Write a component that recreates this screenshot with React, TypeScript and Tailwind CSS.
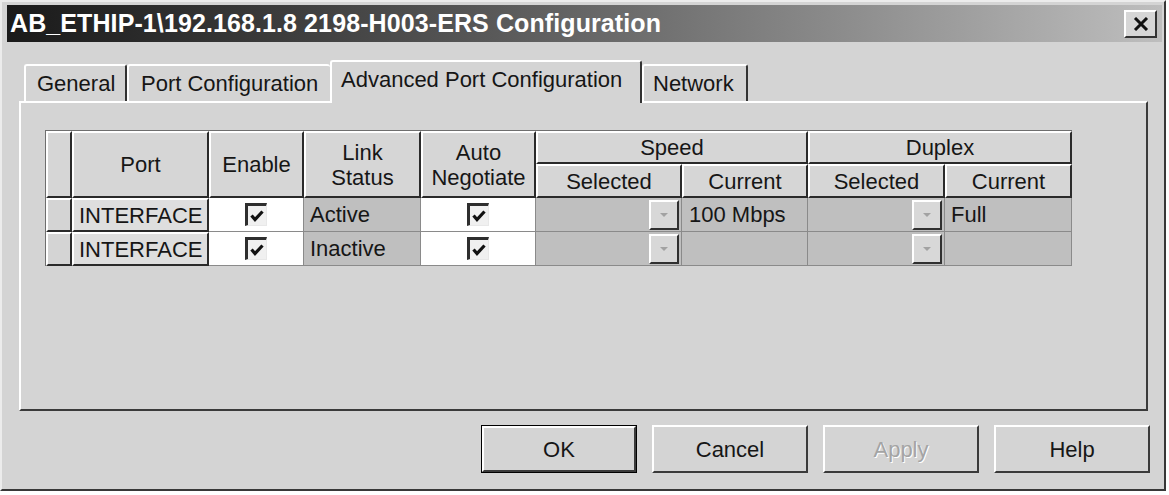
import React from 'react';

const raised =
  'border-t-2 border-l-2 border-r-2 border-b-2 border-t-white border-l-white border-r-[#2a2a2a] border-b-[#2a2a2a]';

function HeaderCell({ children, className = '' }: { children?: React.ReactNode; className?: string }) {
  return (
    <div
      className={`flex items-center justify-center text-center leading-[25px] bg-[#d6d6d6] ${raised} ${className}`}
    >
      {children}
    </div>
  );
}

function CheckBox() {
  return (
    <div className="w-[22px] h-[23px] border-t-[3px] border-l-[3px] border-t-[#2e2e2e] border-l-[#2e2e2e] border-r border-b border-r-[#e8e8e8] border-b-[#e8e8e8] bg-[#f0f0f0] flex items-center justify-center">
      <svg width="16" height="16" viewBox="0 0 16 16">
        <polyline points="2.5,7.5 6,11.5 13.5,3.5" fill="none" stroke="#111" strokeWidth="3.2" />
      </svg>
    </div>
  );
}

function DropButton() {
  return (
    <div className="w-[30px] h-[30px] mr-[2px] bg-[#d8d8d8] border-t-2 border-l-2 border-t-white border-l-white border-r-2 border-b-2 border-r-[#303030] border-b-[#303030] flex items-center justify-center">
      <svg width="10" height="6" viewBox="0 0 10 6">
        <polygon points="1,1 9,1 5,5" fill="#a2a2a2" />
      </svg>
    </div>
  );
}

const rows = [
  { link: 'Active', speed: '100 Mbps', duplex: 'Full' },
  { link: 'Inactive', speed: '', duplex: '' },
];

function PortTable() {
  return (
    <div className="grid grid-cols-[26px_137px_95px_117px_115px_146px_126px_137px_127px] grid-rows-[33px_34px_34px_34px] border-t border-l border-[#6e6e6e] w-fit">
      <HeaderCell className="row-span-2" />
      <HeaderCell className="row-span-2">Port</HeaderCell>
      <HeaderCell className="row-span-2">Enable</HeaderCell>
      <HeaderCell className="row-span-2">
        Link
        <br />
        Status
      </HeaderCell>
      <HeaderCell className="row-span-2">
        Auto
        <br />
        Negotiate
      </HeaderCell>
      <HeaderCell className="col-span-2">Speed</HeaderCell>
      <HeaderCell className="col-span-2">Duplex</HeaderCell>
      <HeaderCell>Selected</HeaderCell>
      <HeaderCell>Current</HeaderCell>
      <HeaderCell>Selected</HeaderCell>
      <HeaderCell>Current</HeaderCell>

      {rows.map((r, i) => (
        <React.Fragment key={i}>
          <div className={`bg-[#d4d4d4] ${raised}`} />
          <div className={`bg-[#dedede] ${raised} flex items-center pl-[5px]`}>INTERFACE</div>
          <div className="bg-white border-r border-b border-[#8a8a8a] flex items-center justify-center">
            <CheckBox />
          </div>
          <div className="bg-[#bfbfbf] border-r border-b border-[#8a8a8a] flex items-center pl-[6px]">
            {r.link}
          </div>
          <div className="bg-white border-r border-b border-[#8a8a8a] flex items-center justify-center">
            <CheckBox />
          </div>
          <div className="bg-[#bfbfbf] border-r border-b border-[#8a8a8a] flex items-center justify-end">
            <DropButton />
          </div>
          <div className="bg-[#bfbfbf] border-r border-b border-[#8a8a8a] flex items-center pl-[7px]">
            {r.speed}
          </div>
          <div className="bg-[#bfbfbf] border-r border-b border-[#8a8a8a] flex items-center justify-end">
            <DropButton />
          </div>
          <div className="bg-[#bfbfbf] border-r border-b border-[#8a8a8a] flex items-center pl-[6px]">
            {r.duplex}
          </div>
        </React.Fragment>
      ))}
    </div>
  );
}

function Tab({ label, selected, className = '' }: { label: string; selected?: boolean; className?: string }) {
  return (
    <div
      className={`flex items-center bg-[#d4d4d4] border-t-2 border-l-2 border-t-white border-l-white rounded-t-[3px] ${
        selected ? 'h-[43px] pb-[6px] relative z-10' : 'h-[37px] mb-[2px]'
      } ${className}`}
    >
      {label}
    </div>
  );
}

function DialogButton({ label, isDefault, disabled }: { label: string; isDefault?: boolean; disabled?: boolean }) {
  return (
    <div className={`w-[156px] h-[48px] ${isDefault ? 'border border-black' : ''}`}>
      <div
        className={`w-full h-full bg-[#d4d4d4] border-t-2 border-l-2 border-t-white border-l-white border-r-2 border-b-2 border-r-[#3a3a3a] border-b-[#3a3a3a] flex items-center justify-center ${
          disabled ? 'text-[#a4a4a4] [text-shadow:1px_1px_0_#fff]' : ''
        }`}
      >
        {label}
      </div>
    </div>
  );
}

export default function App() {
  return (
    <div className="w-[1169px] h-[495px] bg-white overflow-hidden font-['Liberation_Sans',Arial,sans-serif] text-[22px] text-[#161616]">
      <div className="w-[1166px] h-[491px] bg-[#d4d4d4] border-2 border-t-[#ececec] border-l-[#ececec] border-r-[#383838] border-b-[#383838] flex flex-col">
        {/* Title bar */}
        <div className="mt-[3px] ml-[5px] mr-[2px] h-[37px] bg-linear-to-r from-[#1a1a1a] to-[#bebebe] flex items-center justify-between pl-[3px] pr-[5px]">
          <span className="text-white font-bold text-[25px] tracking-[0.1px]">
            AB_ETHIP-1\192.168.1.8 2198-H003-ERS Configuration
          </span>
          <div className="w-[33px] h-[28px] bg-[#d6d6d6] border-t-2 border-l-2 border-t-white border-l-white border-r-2 border-b-2 border-r-[#333] border-b-[#333] flex items-center justify-center">
            <svg width="16" height="14" viewBox="0 0 16 14">
              <path d="M2 1 L14 13 M14 1 L2 13" stroke="#111" strokeWidth="3" />
            </svg>
          </div>
        </div>

        {/* Tabs */}
        <div className="mt-[18px] ml-[22px] flex items-end h-[43px] -mb-[2px] relative z-10">
          <Tab label="General" className="w-[103px] pl-[11px] border-r-2 border-r-[#333]" />
          <Tab label="Port Configuration" className="w-[203px] pl-[12px]" />
          <Tab label="Advanced Port Configuration" selected className="w-[312px] pl-[9px] border-r-2 border-r-[#333]" />
          <Tab label="Network" className="w-[106px] pl-[9px] border-r-2 border-r-[#333]" />
        </div>

        {/* Panel */}
        <div className="ml-[17px] w-[1129px] h-[310px] border-t-2 border-l-2 border-t-white border-l-white border-r-2 border-b-2 border-r-[#3a3a3a] border-b-[#3a3a3a] pl-[24px] pt-[27px]">
          <PortTable />
        </div>

        {/* Buttons */}
        <div className="mt-[14px] flex justify-end gap-[15px] pr-[14px]">
          <DialogButton label="OK" isDefault />
          <DialogButton label="Cancel" />
          <DialogButton label="Apply" disabled />
          <DialogButton label="Help" />
        </div>
      </div>
    </div>
  );
}
